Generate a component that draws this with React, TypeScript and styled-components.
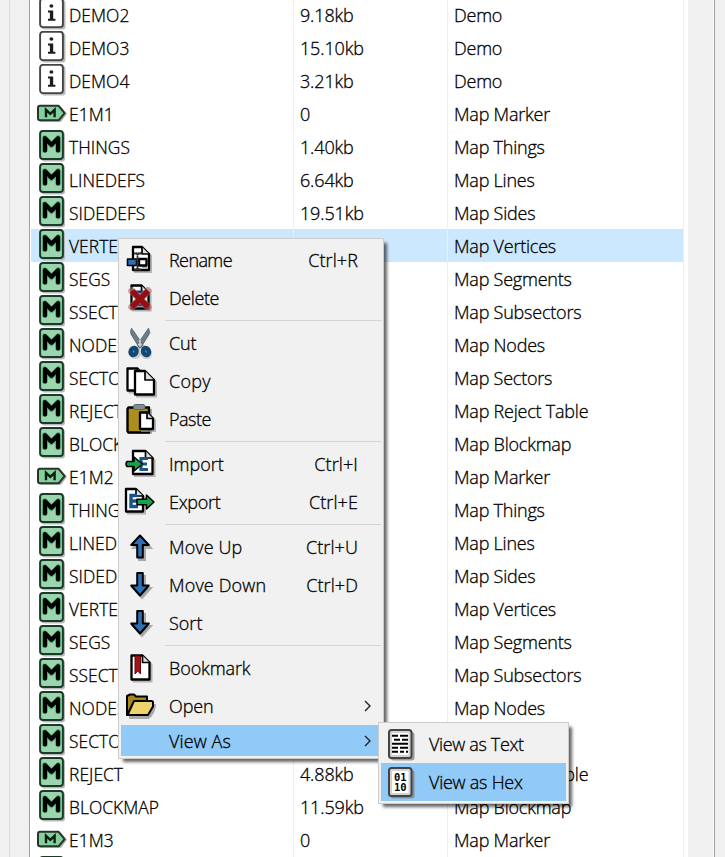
import React from "react";
import styled, { createGlobalStyle } from "styled-components";

const GlobalStyle = createGlobalStyle`
  html, body { margin: 0; padding: 0; }
  body { overflow: hidden; }
  * { box-sizing: border-box; }
`;

const Window = styled.div`
  position: relative;
  width: 725px;
  height: 857px;
  overflow: hidden;
  display: flex;
  background: #f0f0f0;
  color: #000;
  font: 300 18px/33px "Open Sans", "Noto Sans", sans-serif;
  -webkit-text-stroke: 0.3px #000;
  white-space: nowrap;
`;

const LeftGutter = styled.div`
  width: 30px;
  flex: none;
  padding-left: 9px;
  border-right: 1px solid #a0a0a4;
  &::before {
    content: "";
    display: block;
    width: 1px;
    height: 100%;
    background: #dcdcdc;
  }
`;

const ListPane = styled.div`
  width: 658px;
  flex: none;
  background: #fff;
  padding-left: 1px;
`;

const Scrollbar = styled.div`
  width: 27px;
  flex: none;
  background: #f0f0f0;
  border-right: 1px solid #a0a0a4;
  box-shadow: inset -1px 0 #fff;
`;

const Rows = styled.div`
  margin-top: -2px;
  width: 653px;
`;

const Row = styled.div<{ $selected?: boolean }>`
  display: grid;
  grid-template-columns: 263px 154px 236px;
  height: 33px;
  background: ${(p) => (p.$selected ? "#cce8ff" : "#fff")};
`;

const Cell = styled.div`
  display: flex;
  padding: 1px 0 0 6px;
  border-right: 1px solid #e5f1fb;
`;

const NameCell = styled(Cell)`
  padding-left: 5px;
`;

const IconSlot = styled.div`
  width: 33px;
  height: 32px;
  flex: none;
  margin-top: -1px;
  svg { display: block; }
`;

const Fit = styled.span<{ $size?: number; $spacing?: number }>`
  font-size: ${(p) => p.$size ?? 18}px;
  letter-spacing: ${(p) => p.$spacing ?? 0}px;
`;

const Menu = styled.div<{ $x: number; $y: number; $w: number }>`
  position: absolute;
  left: ${(p) => p.$x}px;
  top: ${(p) => p.$y}px;
  width: ${(p) => p.$w}px;
  padding: 2px;
  border: 1px solid #ccc;
  background: #f1f1f1;
  box-shadow: 4px 4px 3px -1px rgba(0, 0, 0, 0.6);
`;

const Item = styled.div<{ $active?: boolean; $short?: boolean }>`
  display: flex;
  align-items: center;
  height: ${(p) => (p.$short ? 31 : 38)}px;
  background: ${(p) => (p.$active ? "#91c9f7" : "transparent")};
`;

const ItemIcon = styled.div`
  width: 48px;
  height: 36px;
  flex: none;
  svg { display: block; overflow: visible; }
`;

const Label = styled.span<{ $spacing: number }>`
  flex: 1;
  line-height: 30px;
  letter-spacing: ${(p) => p.$spacing}px;
`;

const Shortcut = styled.span`
  line-height: 30px;
  letter-spacing: 0.1px;
  margin-right: 23px;
`;

const Arrow = styled.svg`
  width: 10px;
  height: 14px;
  margin-right: 8px;
`;

const Separator = styled.div`
  height: 7px;
  padding: 3px 0 0 44px;
  &::before {
    content: "";
    display: block;
    height: 1px;
    background: #d4d4d4;
  }
`;

type Kind = "info" | "marker" | "map";

const ListIcon = ({ kind }: { kind: Kind }) => (
  <svg width="32" height="32" viewBox="0 0 32 32">
    {kind === "info" && (
      <>
        <rect x="5.5" y="2" width="24" height="29.5" rx="3" fill="#b9b9b9" />
        <rect x="4.1" y="0.9" width="22.8" height="28.2" rx="2.8" fill="#fff" stroke="#444" strokeWidth="1.9" />
        <ellipse cx="15.4" cy="8" rx="2" ry="1.8" fill="#222" />
        <path d="M12 12.4h5.2v8.3h2.2v2H12v-2h1.9v-6.3H12z" fill="#1c1c1c" />
      </>
    )}
    {kind === "map" && (
      <>
        <rect x="5.5" y="2" width="23.5" height="29.5" rx="3" fill="#b9b9b9" />
        <rect x="4.1" y="1" width="22.8" height="28.1" rx="2.8" fill="#9bd5ae" stroke="#1c3a2a" strokeWidth="2" />
        <path d="M8.8 20V8.2l6.7 7 6.7-7V20" fill="none" stroke="#55b878" strokeWidth="6" strokeLinejoin="round" strokeLinecap="round" />
        <path d="M9 20.4V8.2l6.5 6.6L22 8.2v12.2" fill="none" stroke="#000" strokeWidth="4.2" strokeLinejoin="round" strokeLinecap="round" />
      </>
    )}
    {kind === "marker" && (
      <g transform="translate(0 .8)">
        <path d="M4 8h20l7 8-6 8H4z" fill="#aaa" />
        <path d="M4 8h18.6l6 7.3-6 7.2H4q-2 0-2-2V10q0-2 2-2z" fill="#84d09d" stroke="#26352c" strokeWidth="2" strokeLinejoin="round" />
        <path d="M10 19.4V12l4.3 4 4.3-4v7.4" fill="none" stroke="#0c1c12" strokeWidth="2.4" />
      </g>
    )}
  </svg>
);

const lumps: [string, string, string][] = [
  ["THINGS", "", "Map Things"],
  ["LINEDEFS", "", "Map Lines"],
  ["SIDEDEFS", "", "Map Sides"],
  ["VERTEXES", "", "Map Vertices"],
  ["SEGS", "", "Map Segments"],
  ["SSECTORS", "", "Map Subsectors"],
  ["NODES", "", "Map Nodes"],
  ["SECTORS", "", "Map Sectors"],
];

const firstMapSizes = ["1.40kb", "6.64kb", "19.51kb"];

const rows: [Kind, string, string, string][] = [
  ["info", "DEMO2", "9.18kb", "Demo"],
  ["info", "DEMO3", "15.10kb", "Demo"],
  ["info", "DEMO4", "3.21kb", "Demo"],
  ["marker", "E1M1", "0", "Map Marker"],
  ...lumps.map(([n, , t], i) => ["map", n, firstMapSizes[i] ?? "", t] as [Kind, string, string, string]),
  ["map", "REJECT", "", "Map Reject Table"],
  ["map", "BLOCKMAP", "", "Map Blockmap"],
  ["marker", "E1M2", "", "Map Marker"],
  ...lumps.map((l) => ["map", ...l] as [Kind, string, string, string]),
  ["map", "REJECT", "4.88kb", "Map Reject Table"],
  ["map", "BLOCKMAP", "11.59kb", "Map Blockmap"],
  ["marker", "E1M3", "0", "Map Marker"],
  ["map", "", "", ""],
];

type IconName =
  | "rename" | "delete" | "cut" | "copy" | "paste" | "import" | "export"
  | "up" | "down" | "bookmark" | "open" | "text" | "hex";

const ink = { stroke: "#000", strokeWidth: 2, strokeLinejoin: "round" as const, strokeLinecap: "round" as const };

const Page = ({ x, y, w, h, c = 7 }: { x: number; y: number; w: number; h: number; c?: number }) => (
  <g>
    <path d={`M${x + 2} ${y + 2}h${w - c}l${c} ${c}v${h - c}h${-w}z`} fill="#999" stroke="#999" strokeWidth="2" opacity=".7" />
    <path d={`M${x} ${y}h${w - c}l${c} ${c}v${h - c}h${-w}z`} fill="#fff" {...ink} strokeWidth="2.3" />
    <path d={`M${x + w - c} ${y}v${c}h${c}`} fill="#ddd" {...ink} strokeWidth="1.7" />
  </g>
);

const BlueArrow = ({ flip }: { flip?: boolean }) => (
  <>
    <path transform="translate(2 2)" d={flip ? "M16 7h6v12h6l-9 10-9-10h6z" : "M19 7l9 10h-6v12h-6V17h-6z"} fill="#999" stroke="#aaa" strokeWidth="2" />
    <path d={flip ? "M16.2 6h5.6v12.5h6L19 28.5l-8.8-10h6z" : "M19 6.5l8.8 9.5h-6v12.5h-5.6V16h-6z"} fill="#2d70b8" {...ink} />
  </>
);

const MenuIcon = ({ name }: { name: IconName }) => (
  <svg width="48" height="36" viewBox="0 0 48 36">
    {name === "rename" && (
      <>
        <Page x={12} y={5} w={16} h={23} />
        <path d="M15 11h5M21 25h5" stroke="#aaa" strokeWidth="2" />
        <path d="M6.5 17h9v6.5h-9z" fill="#2d70b8" {...ink} strokeWidth="1.6" />
        <path d="M18 17h7.5v6.5H18z" fill="#fff" {...ink} strokeWidth="2.4" />
        <path d="M13 11.5h2.2l1.3 1.2 1.5-1.2h2M16.5 12.5v14M13 27.5h2.2l1.3-1.2 1.5 1.2h2" fill="none" stroke="#333" strokeWidth="1.8" />
      </>
    )}
    {name === "delete" && (
      <>
        <Page x={10.5} y={5.5} w={17} h={23} />
        <path d="M14 12h8M14 25h9" stroke="#123d78" strokeWidth="3" />
        <path d="M11 11l16 16M27 11L11 27" stroke="#b26e6e" strokeWidth="7.4" strokeLinecap="round" opacity=".65" />
        <path d="M11 11l16 16M27 11L11 27" stroke="#930f14" strokeWidth="5.8" />
      </>
    )}
    {name === "cut" && (
      <>
        <g transform="translate(1.5 1.5)" opacity=".35" stroke="#888" fill="none" strokeWidth="4"><path d="M10 5l12 18M27 5L15 23" /><circle cx="13" cy="27" r="3.5" /><circle cx="24" cy="27" r="3.5" /></g>
        <path d="M10.5 3.2q-2 4 0 6.8l8 13 3.4-3zM27.5 3.2q2 4 0 6.8l-8 13-3.4-3z" fill="#6e7c87" stroke="#51606c" strokeWidth=".8" />
        <path d="M18.8 15v2" stroke="#ccd4da" strokeWidth="2" />
        <ellipse cx="12.6" cy="26.5" rx="2.8" ry="3.6" transform="rotate(22 12.6 26.5)" fill="#8aa5ba" stroke="#134874" strokeWidth="4.6" />
        <ellipse cx="25" cy="26.5" rx="2.8" ry="3.6" transform="rotate(-22 25 26.5)" fill="#8aa5ba" stroke="#134874" strokeWidth="4.6" />
      </>
    )}
    {name === "copy" && (
      <>
        <Page x={6.5} y={5.5} w={15} h={22} c={5} />
        <Page x={14} y={8} w={19} h={23.5} c={9} />
      </>
    )}
    {name === "paste" && (
      <>
        <path d="M9 8h22v25H9z" fill="#aaa" />
        <path d="M7.5 6.5H28v25H7.5L6.5 30V8z" fill="#ac8e1c" {...ink} strokeWidth="2.4" />
        <rect x="12.5" y="3.5" width="11.5" height="5" rx="2" fill="#7c8e93" stroke="#57686d" strokeWidth="1" />
        <Page x={19} y={11.5} w={13} h={16.5} c={6} />
      </>
    )}
    {name === "import" && (
      <>
        <Page x={12} y={5} w={19.5} h={23} />
        <path d="M27 12.5h-7v11h7M20 18h6" stroke="#17568d" strokeWidth="3.2" fill="none" />
        <path d="M6 15.5h7V11l8.5 7-8.5 7v-4.5H6q-2-2.5 0-5z" fill="#15a34c" {...ink} strokeWidth="1.5" />
      </>
    )}
    {name === "export" && (
      <>
        <Page x={5} y={5} w={17} h={22.5} />
        <path d="M16 11.5h-6v11h7M10 17h7" stroke="#17568d" strokeWidth="3.4" fill="none" />
        <path d="M16 15.3h9.5V11L33 18l-7.5 7v-4.3H16z" fill="#15a34c" {...ink} strokeWidth="1.5" />
      </>
    )}
    {name === "up" && <BlueArrow />}
    {name === "down" && <BlueArrow flip />}
    {name === "bookmark" && (
      <>
        <Page x={10.5} y={5.5} w={18} h={24} />
        <path d="M14 6h5.5v18l-2.7-3-2.8 3z" fill="#a5121b" stroke="#650a10" strokeWidth="1" />
      </>
    )}
    {name === "open" && (
      <>
        <path d="M8 29h19q6-5 6-13" fill="none" stroke="#aaa" strokeWidth="4" />
        <path d="M6 27V8l3-1.5h4l2 2h11v6H13z" fill="#a8881b" {...ink} />
        <path d="M13 13h17.5q1.5 0 1.5 1.5v4L27 27H6.5z" fill="#eed36c" {...ink} />
      </>
    )}
    {(name === "text" || name === "hex") && (
      <>
        <rect x="9.5" y="6" width="24" height="28.5" rx="3" fill="#777" opacity=".7" />
        <rect x="8" y="4" width="22.5" height="28" rx="2.5" fill="#d2d2d2" stroke="#444" strokeWidth="2" />
        <rect x="11" y="7" width="16.5" height="22" fill="#fff" />
      </>
    )}
    {name === "text" && (
      <path d="M11 9.7h6M19 9.7h8M13 13.7h6M21 13.7h6M11 17.7h16M11 21.7h6M19 21.7h8M11 25.7h6M19 25.7h4M25 25.7h2" stroke="#000" strokeWidth="2" />
    )}
    {name === "hex" && (
      <g fontFamily="DejaVu Sans Mono" fontWeight="700" fontSize="10.5" textAnchor="middle" fill="#000">
        <text x="19.3" y="17">01</text>
        <text x="19.3" y="27">10</text>
      </g>
    )}
  </svg>
);

interface Entry {
  label: string;
  spacing?: number;
  icon?: IconName;
  keys?: string;
  sub?: boolean;
  active?: boolean;
  short?: boolean;
}

const groups: Entry[][] = [
  [{ label: "Rename", icon: "rename", keys: "Ctrl+R", spacing: -0.6 }, { label: "Delete", icon: "delete", spacing: -0.4 }],
  [{ label: "Cut", icon: "cut", spacing: -0.2 }, { label: "Copy", icon: "copy", spacing: 0.3 }, { label: "Paste", icon: "paste", spacing: -0.5 }],
  [{ label: "Import", icon: "import", keys: "Ctrl+I", spacing: 0 }, { label: "Export", icon: "export", keys: "Ctrl+E", spacing: -0.3 }],
  [
    { label: "Move Up", icon: "up", keys: "Ctrl+U", spacing: 0.1 },
    { label: "Move Down", icon: "down", keys: "Ctrl+D", spacing: 0.15 },
    { label: "Sort", icon: "down", spacing: 0 },
  ],
  [
    { label: "Bookmark", icon: "bookmark", spacing: -0.1 },
    { label: "Open", icon: "open", sub: true, spacing: -0.1 },
    { label: "View As", sub: true, active: true, short: true, spacing: 0.1 },
  ],
];

const MenuItem = ({ e }: { e: Entry }) => (
  <Item $active={e.active} $short={e.short}>
    <ItemIcon>{e.icon && <MenuIcon name={e.icon} />}</ItemIcon>
    <Label $spacing={e.spacing ?? 0}>{e.label}</Label>
    {e.keys && <Shortcut>{e.keys}</Shortcut>}
    {e.sub && (
      <Arrow viewBox="0 0 10 14">
        <path d="M2 2l5 5-5 5" fill="none" stroke="#222" strokeWidth="1.4" />
      </Arrow>
    )}
  </Item>
);

export default function App() {
  return (
    <Window>
      <GlobalStyle />
      <LeftGutter />
      <ListPane>
        <Rows>
          {rows.map(([kind, name, size, type], i) => (
            <Row key={i} $selected={i === 7}>
              <NameCell>
                <IconSlot><ListIcon kind={kind} /></IconSlot>
                <Fit $size={17.4} $spacing={0.05}>{name}</Fit>
              </NameCell>
              <Cell><Fit $spacing={-0.15}>{size}</Fit></Cell>
              <Cell><Fit $spacing={-0.22}>{type}</Fit></Cell>
            </Row>
          ))}
        </Rows>
      </ListPane>
      <Scrollbar />
      <Menu $x={118} $y={238} $w={266}>
        {groups.map((g, i) => (
          <React.Fragment key={i}>
            {i > 0 && <Separator />}
            {g.map((e) => <MenuItem key={e.label} e={e} />)}
          </React.Fragment>
        ))}
      </Menu>
      <Menu $x={378} $y={722} $w={191}>
        <MenuItem e={{ label: "View as Text", icon: "text", spacing: -0.35 }} />
        <MenuItem e={{ label: "View as Hex", icon: "hex", active: true, spacing: -0.25 }} />
      </Menu>
    </Window>
  );
}
